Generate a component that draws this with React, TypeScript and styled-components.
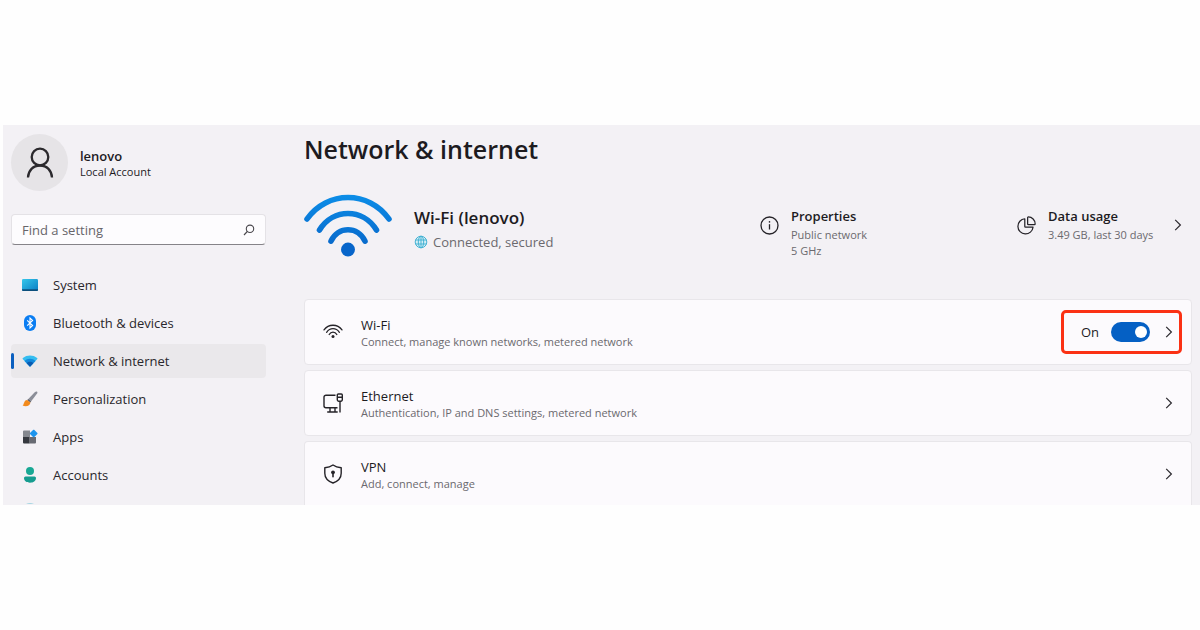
import React, { useState } from "react";
import styled, { createGlobalStyle } from "styled-components";

const GlobalStyle = createGlobalStyle`
  * { box-sizing: border-box; }
  body {
    margin: 0;
    background: #fefefe;
    color: #1d1b1f;
    font-family: "Open Sans", "Noto Sans", sans-serif;
    font-size: 13px;
  }
  button { font: inherit; color: inherit; background: none; border: 0; padding: 0; }
  h1, h2, h3, p, ul { margin: 0; padding: 0; }
  svg { display: block; flex: none; }
`;

const Page = styled.div`
  min-height: 100vh;
  display: flex;
  flex-direction: column;
  justify-content: center;
  padding-left: 3px;
`;

const Window = styled.div`
  display: flex;
  gap: 38px;
  padding: 0 8px;
  background: #f3f1f5;
  overflow: hidden;
`;

const Sidebar = styled.aside`
  flex: none;
  width: 255px;
  display: flex;
  flex-direction: column;
  padding-top: 9px;
`;

const Account = styled.div`
  display: flex;
  align-items: center;
  gap: 12px;
`;

const AccountText = styled.div`
  padding-top: 3px;
`;

const Avatar = styled.div`
  width: 57px;
  height: 57px;
  border-radius: 50%;
  background: #e6e4e7;
  display: grid;
  place-items: center;
`;

const AccountName = styled.p`
  font-size: 13px;
  line-height: 16px;
  font-weight: 600;
`;

const AccountType = styled.p`
  font-size: 11px;
  line-height: 16px;
`;

const SearchBox = styled.label`
  margin-top: 23px;
  height: 31px;
  display: flex;
  align-items: center;
  padding: 0 10px;
  background: #fdfcfe;
  border: 1px solid #e4e2e6;
  border-bottom-color: #858388;
  border-radius: 4px;
`;

const SearchInput = styled.input`
  flex: 1;
  min-width: 0;
  border: 0;
  outline: 0;
  padding: 0;
  background: transparent;
  font: inherit;
  &::placeholder { color: #67656a; opacity: 1; }
`;

const NavList = styled.ul`
  list-style: none;
  margin-top: 23px;
  display: flex;
  flex-direction: column;
  gap: 4px;
`;

const NavLink = styled.a<{ $active?: boolean }>`
  height: 34px;
  display: flex;
  align-items: center;
  gap: 15px;
  padding-left: 8px;
  border-left: 3px solid transparent;
  border-radius: 4px;
  background: ${(p) => (p.$active ? "#eae8eb" : "transparent")};
  color: #29272c;
  text-decoration: none;
  position: relative;
  &::before {
    content: "";
    display: ${(p) => (p.$active ? "block" : "none")};
    position: absolute;
    left: -3px;
    top: 9px;
    width: 3px;
    height: 16px;
    border-radius: 2px;
    background: #0a5fbf;
  }
`;

const NextItem = styled.div`
  height: 1px;
  margin-top: 11px;
  padding-left: 15px;
`;

const Main = styled.main`
  flex: 1;
  min-width: 0;
  padding-top: 7px;
`;

const Title = styled.h1`
  font-size: 25px;
  line-height: 34px;
  font-weight: 600;
`;

const Hero = styled.section`
  margin-top: 28px;
  margin-bottom: 40px;
  display: grid;
  grid-template-columns: 1fr 257px 175px;
`;

const Connection = styled.div`
  display: flex;
  gap: 22px;
`;

const ConnectionText = styled.div`
  padding-top: 12px;
`;

const ConnectionName = styled.h2`
  font-size: 17px;
  line-height: 24px;
  font-weight: 600;
`;

const Status = styled.p`
  display: flex;
  align-items: center;
  gap: 5px;
  line-height: 24px;
  color: #6b696e;
`;

const Fact = styled.div`
  display: flex;
  gap: 12px;
  padding-top: 13px;
  > svg { margin-top: 9px; }
`;

const FactText = styled.div`
  flex: 1;
  white-space: nowrap;
`;

const FactTitle = styled.h3`
  font-size: 13px;
  line-height: 18px;
  font-weight: 600;
  margin-bottom: 2px;
`;

const Detail = styled.p`
  font-size: 11px;
  line-height: 16px;
  color: #6b696e;
`;

const FactButton = styled.button`
  align-self: flex-start;
  margin: 11px 10px 0 0;
`;

const Cards = styled.div`
  display: flex;
  flex-direction: column;
  gap: 5px;
`;

const Card = styled.section<{ $cut?: boolean }>`
  height: ${(p) => (p.$cut ? 64 : 66)}px;
  display: flex;
  align-items: center;
  gap: 18px;
  padding: 0 9px 0 18px;
  background: #fcfafd;
  border: 1px solid #e8e6ea;
  border-radius: ${(p) => (p.$cut ? "4px 4px 0 0" : "4px")};
  border-bottom-width: ${(p) => (p.$cut ? 0 : 1)}px;
`;

const CardText = styled.div`
  flex: 1;
  padding-top: 3px;
`;

const CardTitle = styled.h3`
  font-size: 13px;
  line-height: 17px;
  font-weight: 400;
`;

const Controls = styled.div<{ $marked?: boolean }>`
  height: 44px;
  display: flex;
  align-items: center;
  padding: 0 6px 0 17px;
  border: 3px solid ${(p) => (p.$marked ? "#fb3114" : "transparent")};
  border-radius: 5px;
`;

const SwitchLabel = styled.label`
  display: flex;
  align-items: center;
  gap: 12px;
  margin-right: 15px;
`;

const Switch = styled.input`
  appearance: none;
  margin: 0;
  width: 39px;
  height: 20px;
  border-radius: 10px;
  background: #8a888d;
  display: flex;
  align-items: center;
  padding: 0 3px;
  &::before {
    content: "";
    width: 12px;
    height: 12px;
    border-radius: 50%;
    background: #fff;
  }
  &:checked {
    background: #0560c4;
    justify-content: flex-end;
  }
`;

const Chevron = () => (
  <svg width="8" height="14" viewBox="0 0 8 14" fill="none" stroke="#2b292e" strokeWidth="1.2">
    <path d="M1.2 1.8 6.4 7 1.2 12.2" />
  </svg>
);

const PersonIcon = () => (
  <svg width="28" height="32" viewBox="0 0 28 32" fill="none" stroke="#2b292d" strokeWidth="2.3">
    <circle cx="14" cy="10" r="8.3" />
    <path d="M2 30.5C2.4 23.400 7 18.500 14 18.500S25.600 23.400 26 30.500" />
  </svg>
);

const SearchIcon = () => (
  <svg width="12" height="12" viewBox="0 0 12 12" fill="none" stroke="#4b494e" strokeWidth="1.1">
    <circle cx="7" cy="4.8" r="3.7" />
    <path d="M4.300 7.500 1 11" />
  </svg>
);

const SystemIcon = () => (
  <svg width="16" height="16" viewBox="0 0 16 16">
    <defs>
      <linearGradient id="screen" x1="0" y1="0" x2="1" y2="1">
        <stop offset="0" stopColor="#35c7ea" />
        <stop offset="1" stopColor="#0a7dc4" />
      </linearGradient>
    </defs>
    <rect y="2" width="16" height="12" rx="1.2" fill="url(#screen)" />
    <path d="M0 12.200h16v.6a1.200 1.200 0 0 1-1.200 1.200H1.200A1.200 1.200 0 0 1 0 12.800z" fill="#0c4f7c" />
  </svg>
);

const BluetoothIcon = () => (
  <svg width="16" height="16" viewBox="0 0 16 16">
    <rect x="2" width="12" height="16" rx="6" fill="#0a7df2" />
    <path d="M5.200 5.300 10.600 10.500 8 13V3l2.600 2.500-5.400 5.200" fill="none" stroke="#fff" strokeWidth="1.1" />
  </svg>
);

const NetworkIcon = () => (
  <svg width="16" height="16" viewBox="0 0 16 16">
    <path d="M8 13.700.7 6.100Q.3 5.500.9 5C5 1.700 11 1.700 15.100 5q.6.5.2 1.100z" fill="#35bdf0" />
    <path d="M8 13.700 2.500 8C5.600 5 10.400 5 13.500 8z" fill="#1389dc" />
    <path d="M8 13.700 4.600 10.200C6.500 8.400 9.500 8.400 11.400 10.200z" fill="#0a5bb0" />
  </svg>
);

const BrushIcon = () => (
  <svg width="16" height="16" viewBox="0 0 16 16">
    <path d="M14.900.5c.8.500.6 1.300.2 1.900L9.200 10.300 6.300 8 13 1.100c.6-.6 1.200-.9 1.900-.6z" fill="#8b8e98" />
    <path d="M6.300 8 9.200 10.300 8.300 11.500 5.200 9z" fill="#5c5f68" />
    <path d="M5.200 8.900 8.400 11.500C8.300 14.500 4.500 16.300.5 14.600 2.300 13.900 1.500 9 5.200 8.900z" fill="#f28a1c" />
  </svg>
);

const AppsIcon = () => (
  <svg width="16" height="16" viewBox="0 0 16 16">
    <path d="M2 1.500h6v6.500H1v-5.500a1 1 0 0 1 1-1z" fill="#85888f" />
    <path d="M1 8h6.700v6.500H2a1 1 0 0 1-1-1z" fill="#35383f" />
    <path d="M7.700 8h6.300v5.500a1 1 0 0 1-1 1H7.700z" fill="#686b73" />
    <path d="M11.300.8q.4-.3.800 0l3.300 3.300q.3.400 0 .8l-3.300 3.300q-.4.300-.8 0L8 4.900q-.3-.4 0-.8z" fill="#1c94ee" />
  </svg>
);

const AccountsIcon = () => (
  <svg width="16" height="16" viewBox="0 0 16 16">
    <circle cx="8" cy="4" r="4" fill="#18a894" />
    <path d="M3.500 9.500h9A1.500 1.500 0 0 1 14 11c0 3-2.700 4.700-6 4.700S2 14 2 11a1.500 1.500 0 0 1 1.500-1.500z" fill="#159c8f" />
  </svg>
);

const HeroWifiIcon = () => (
  <svg width="88" height="64" viewBox="0 0 88 64" fill="none" stroke="url(#wave)" strokeWidth="5.6" strokeLinecap="round">
    <defs>
      <linearGradient id="wave" gradientUnits="userSpaceOnUse" x1="0" y1="0" x2="0" y2="64">
        <stop offset="0" stopColor="#0c8ee8" />
        <stop offset="1" stopColor="#0760c4" />
      </linearGradient>
    </defs>
    <path d="M3 25C23-3.600 65-3.600 85 25" />
    <path d="M15.500 36C29 14 59 14 72.500 36" />
    <path d="M27 47.200C34 32 54 32 61 47.200" />
    <circle cx="44" cy="55.6" r="7" fill="#0765ca" stroke="none" />
  </svg>
);

const GlobeIcon = () => (
  <svg width="14" height="14" viewBox="0 0 14 14" fill="none" stroke="#45b3d4" strokeWidth="1">
    <circle cx="7" cy="7" r="5.8" fill="#d5eef5" />
    <ellipse cx="7" cy="7" rx="2.7" ry="5.8" />
    <path d="M1.500 5h11M1.500 9h11M7 1.200v11.600" />
  </svg>
);

const InfoIcon = () => (
  <svg width="19" height="19" viewBox="0 0 19 19" fill="none" stroke="#252328" strokeWidth="1.3">
    <circle cx="9.5" cy="9.5" r="8.5" />
    <path d="M9.500 8.200v5.300" />
    <circle cx="9.5" cy="5.9" r=".8" fill="#252328" stroke="none" />
  </svg>
);

const UsageIcon = () => (
  <svg width="19" height="19" viewBox="0 0 20 20" fill="none" stroke="#252328" strokeWidth="1.3" strokeLinejoin="round">
    <path d="M8.200 2.900a8 8 0 1 0 8.700 8.900H8.900q-.7 0-.7-.7z" />
    <path d="M11.200 1.700q0-.7.700-.7a7.300 7.300 0 0 1 7.200 7.300q0 .7-.7.700h-6.500q-.7 0-.7-.7z" />
  </svg>
);

const WifiIcon = () => (
  <svg width="20" height="20" viewBox="0 0 20 20" fill="none" stroke="#252328" strokeWidth="1.3" strokeLinecap="round">
    <path d="M1 7.900C5.600 1.700 14.400 1.700 19 7.900" />
    <path d="M3.600 10.300C7 5.500 13 5.500 16.400 10.300" />
    <path d="M6.200 12.500C8 9.300 12 9.300 13.800 12.500" />
    <circle cx="10" cy="14.6" r="1.5" fill="#252328" stroke="none" />
  </svg>
);

const EthernetIcon = () => (
  <svg width="20" height="20" viewBox="0 0 20 20" fill="none" stroke="#252328" strokeWidth="1.4" strokeLinejoin="round">
    <path d="M12.500 2.200H3A2 2 0 0 0 1 4.200v8.600a2 2 0 0 0 2 2h11.500" />
    <path d="M7 15v3.700M12 15v3.700M4.200 19h10.500" />
    <path d="M17 8v11.500M14.300 4.300h5v2.500a1.500 1.500 0 0 1-1.500 1.500h-2a1.500 1.500 0 0 1-1.500-1.500zM14.300 4.300V2a1 1 0 0 1 1-1h3a1 1 0 0 1 1 1v2.300" />
  </svg>
);

const ShieldIcon = () => (
  <svg width="20" height="20" viewBox="0 0 20 20" fill="none" stroke="#252328" strokeWidth="1.4" strokeLinejoin="round">
    <path d="M10 1C12.300 2.700 15 3.500 18.200 3.700v5.500c0 4.600-3 7.900-8.200 9.800-5.200-1.900-8.200-5.200-8.200-9.800V3.700C5 3.500 7.700 2.700 10 1z" />
    <circle cx="10" cy="8.3" r="1.9" fill="#252328" stroke="none" />
    <path d="M10 9v3.700" strokeWidth="1.6" strokeLinecap="round" />
  </svg>
);

const navItems = [
  { label: "System", Icon: SystemIcon },
  { label: "Bluetooth & devices", Icon: BluetoothIcon },
  { label: "Network & internet", Icon: NetworkIcon, active: true },
  { label: "Personalization", Icon: BrushIcon },
  { label: "Apps", Icon: AppsIcon },
  { label: "Accounts", Icon: AccountsIcon },
];

export default function App() {
  const [wifiOn, setWifiOn] = useState(true);

  return (
    <Page>
      <GlobalStyle />
      <Window>
        <Sidebar>
          <Account>
            <Avatar><PersonIcon /></Avatar>
            <AccountText>
              <AccountName>lenovo</AccountName>
              <AccountType>Local Account</AccountType>
            </AccountText>
          </Account>
          <SearchBox>
            <SearchInput type="text" placeholder="Find a setting" aria-label="Find a setting" />
            <SearchIcon />
          </SearchBox>
          <nav>
            <NavList>
              {navItems.map(({ label, Icon, active }) => (
                <li key={label}>
                  <NavLink href="#" $active={active} aria-current={active ? "page" : undefined}>
                    <Icon />
                    {label}
                  </NavLink>
                </li>
              ))}
            </NavList>
          </nav>
          <NextItem>
            <svg width="8" height="1" viewBox="0 0 8 1">
              <path d="M0 1Q4-1 8 1z" fill="#a6d5e2" />
            </svg>
          </NextItem>
        </Sidebar>

        <Main>
          <Title>Network &amp; internet</Title>
          <Hero>
            <Connection>
              <HeroWifiIcon />
              <ConnectionText>
                <ConnectionName>Wi-Fi (lenovo)</ConnectionName>
                <Status><GlobeIcon />Connected, secured</Status>
              </ConnectionText>
            </Connection>
            <Fact>
              <InfoIcon />
              <FactText>
                <FactTitle>Properties</FactTitle>
                <Detail>Public network</Detail>
                <Detail>5 GHz</Detail>
              </FactText>
            </Fact>
            <Fact>
              <UsageIcon />
              <FactText>
                <FactTitle>Data usage</FactTitle>
                <Detail>3.49 GB, last 30 days</Detail>
              </FactText>
              <FactButton aria-label="Data usage"><Chevron /></FactButton>
            </Fact>
          </Hero>

          <Cards>
            <Card>
              <WifiIcon />
              <CardText>
                <CardTitle>Wi-Fi</CardTitle>
                <Detail>Connect, manage known networks, metered network</Detail>
              </CardText>
              <Controls $marked>
                <SwitchLabel>
                  {wifiOn ? "On" : "Off"}
                  <Switch
                    type="checkbox"
                    role="switch"
                    aria-label="Wi-Fi"
                    checked={wifiOn}
                    onChange={(e) => setWifiOn(e.target.checked)}
                  />
                </SwitchLabel>
                <button aria-label="Wi-Fi settings"><Chevron /></button>
              </Controls>
            </Card>
            <Card>
              <EthernetIcon />
              <CardText>
                <CardTitle>Ethernet</CardTitle>
                <Detail>Authentication, IP and DNS settings, metered network</Detail>
              </CardText>
              <Controls>
                <button aria-label="Ethernet settings"><Chevron /></button>
              </Controls>
            </Card>
            <Card $cut>
              <ShieldIcon />
              <CardText>
                <CardTitle>VPN</CardTitle>
                <Detail>Add, connect, manage</Detail>
              </CardText>
              <Controls>
                <button aria-label="VPN settings"><Chevron /></button>
              </Controls>
            </Card>
          </Cards>
        </Main>
      </Window>
    </Page>
  );
}
